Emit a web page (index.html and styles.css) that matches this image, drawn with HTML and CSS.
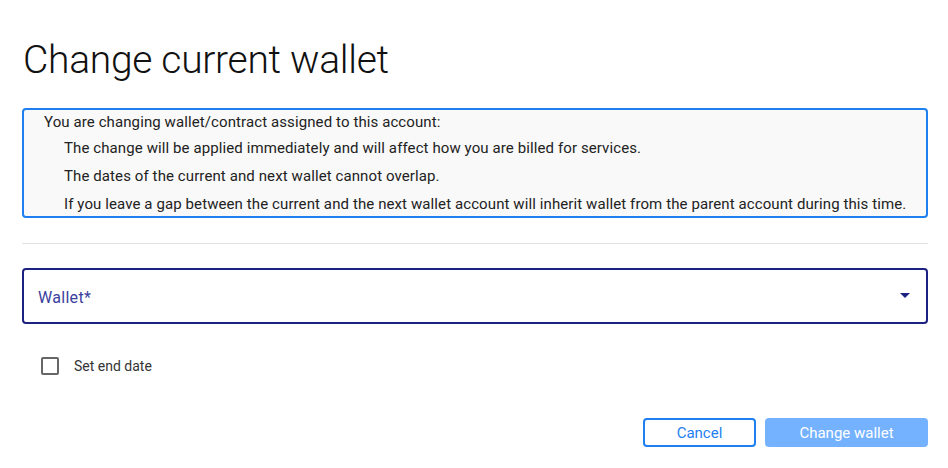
FILE: index.html
```html
<!DOCTYPE html>
<html>
<head>
<meta charset="utf-8">
<link rel="stylesheet" href="styles.css">
</head>
<body>
<div class="dialog">
  <h1 class="title">Change current wallet</h1>
  <div class="info">
    <div class="info-head">You are changing wallet/contract assigned to this account:</div>
    <ul class="info-list">
      <li>The change will be applied immediately and will affect how you are billed for services.</li>
      <li>The dates of the current and next wallet cannot overlap.</li>
      <li>If you leave a gap between the current and the next wallet account will inherit wallet from the parent account during this time.</li>
    </ul>
  </div>
  <hr class="divider">
  <div class="select">
    <span class="select-label">Wallet*</span>
    <span class="caret"></span>
  </div>
  <label class="check">
    <span class="box"></span>
    <span class="check-text">Set end date</span>
  </label>
  <div class="actions">
    <button class="btn btn-outline">Cancel</button>
    <button class="btn btn-primary">Change wallet</button>
  </div>
</div>
</body>
</html>
```
FILE: styles.css
```css
* { box-sizing: border-box; }
html, body { margin: 0; padding: 0; background: #fff; }
body { font-family: Roboto, "Noto Sans", sans-serif; color: #222; }
.dialog { padding: 34px 20px 0 22px; display: flex; flex-direction: column; }
.title { margin: 0 0 0 1px; font-weight: 300; font-size: 39px; line-height: 52px; color: #111; letter-spacing: -0.3px; }
.info { margin-top: 22px; border: 2px solid #1e7ff0; border-radius: 4px; background: #f9f9f9; padding: 3px 0 1px 20px; font-size: 15px; letter-spacing: 0.1px; color: #222; }
.info-head { line-height: 18px; }
.info-list { list-style: none; margin: 0; padding: 0 0 0 20px; }
.info-list li { line-height: 22px; margin-top: 6px; }
.divider { border: 0; border-top: 1px solid #e2e2e2; margin: 25px 0 0 0; }
.select { margin-top: 24px; height: 56px; border: 2px solid #1c2280; border-radius: 4px; display: flex; align-items: center; justify-content: space-between; padding: 2px 16px 0 14px; }
.select-label { color: #3b3f9e; font-size: 16px; letter-spacing: 0.3px; }
.caret { width: 0; height: 0; border-left: 5px solid transparent; border-right: 5px solid transparent; border-top: 5px solid #1c2280; margin-top: -4px; }
.check { display: flex; align-items: center; margin: 33px 0 0 19px; gap: 15px; }
.box { width: 18px; height: 18px; border: 2px solid #666; border-radius: 2px; }
.check-text { font-size: 14px; color: #333; }
.actions { display: flex; justify-content: flex-end; gap: 9px; margin-top: 43px; }
.btn { height: 29px; border-radius: 4px; font-family: inherit; font-size: 15px; padding: 0; }
.btn-outline { width: 113px; border: 2px solid #1e7ff0; background: #fff; color: #1e7ff0; }
.btn-primary { width: 163px; border: 0; background: #74b2ff; color: #fff; }
```
